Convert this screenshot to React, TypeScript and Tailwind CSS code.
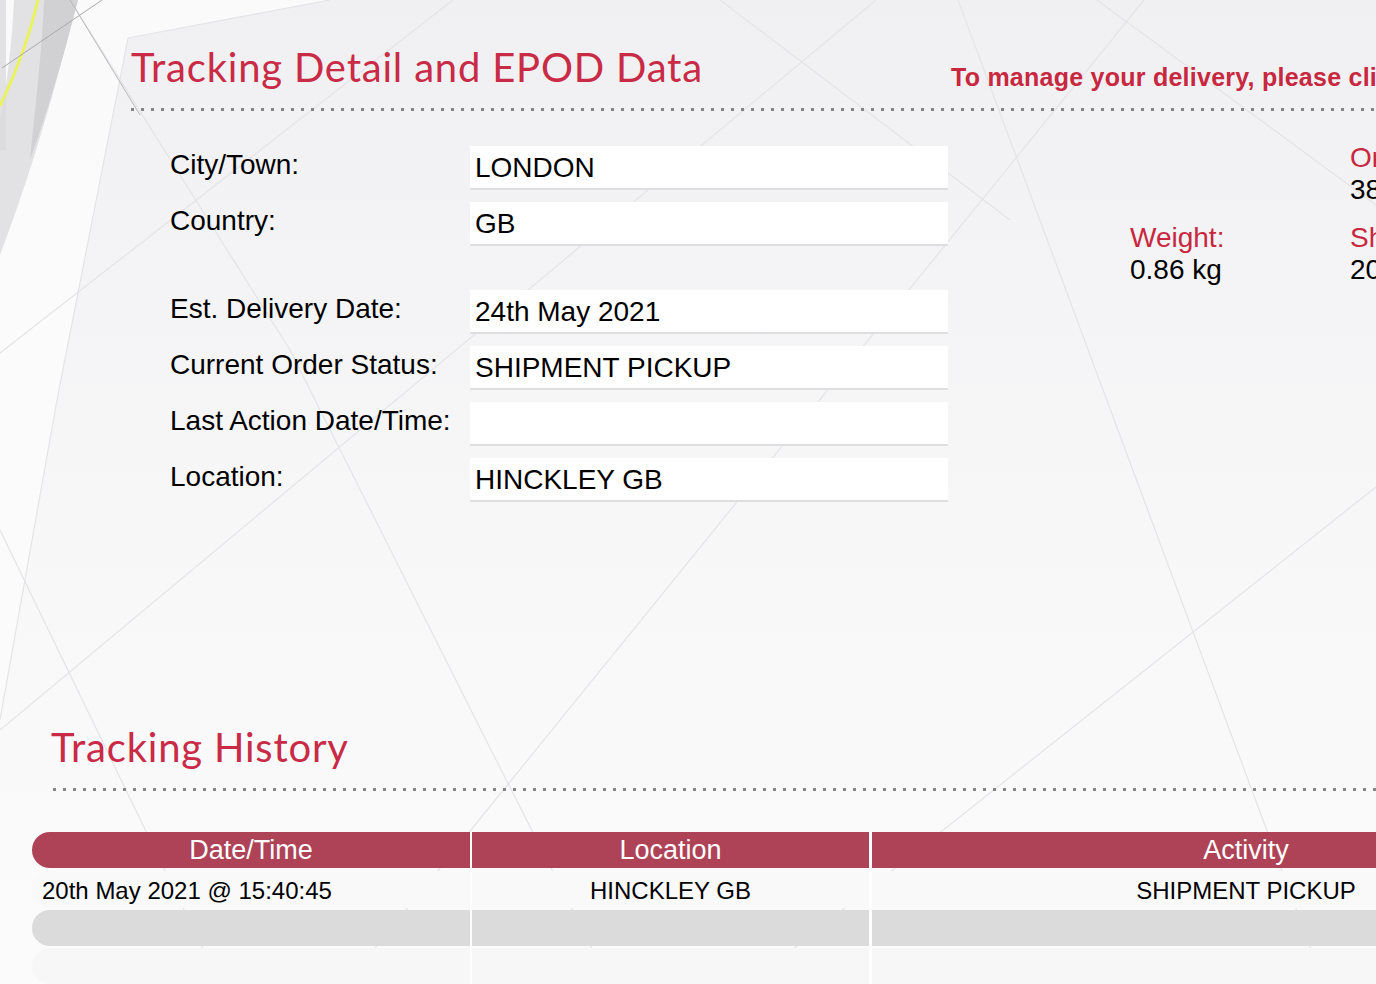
import React from "react";

function Background() {
  const faint = "#e4e4e8";
  return (
    <svg
      className="absolute inset-0"
      width={1376}
      height={984}
      viewBox="0 0 1376 984"
      aria-hidden="true"
    >
      <defs>
        <linearGradient id="bgGrad" x1="0" y1="0" x2="0" y2="1">
          <stop offset="0" stopColor="#f0f0f2" />
          <stop offset="0.6" stopColor="#f8f8f9" />
          <stop offset="1" stopColor="#fbfbfc" />
        </linearGradient>
      </defs>
      <rect x="0" y="0" width="1376" height="984" fill="url(#bgGrad)" />
      {/* lighter left region */}
      <polygon points="0,0 330,0 128,38 57,400 0,720" fill="#fbfbfb" opacity="0.85" />
      {/* faint long lines */}
      <g stroke={faint} strokeWidth="1.2" fill="none">
        <polyline points="70,0 290,350 491,750 610,984" />
        <line x1="0" y1="353" x2="453" y2="0" />
        <line x1="876" y1="0" x2="0" y2="730" />
        <line x1="1144" y1="0" x2="346" y2="984" />
        <line x1="958" y1="0" x2="1324" y2="984" />
        <line x1="1376" y1="487" x2="749" y2="984" />
        <line x1="0" y1="530" x2="220" y2="984" />
        <line x1="720" y1="0" x2="1010" y2="220" />
        <line x1="1097" y1="0" x2="1376" y2="205" />
        <line x1="128" y1="38" x2="57" y2="400" />
        <line x1="57" y1="400" x2="0" y2="720" />
        <line x1="128" y1="38" x2="330" y2="0" />
      </g>
      {/* left gray band */}
      <rect x="0" y="0" width="6" height="150" fill="#dcdcde" opacity="0.8" />
      <path d="M14,0 L78,0 C62,60 40,150 0,255 L0,120 C8,80 12,40 14,0 Z" fill="#dadadc" opacity="0.75" />
      <path d="M44,0 L78,0 C64,55 48,110 30,160 C36,100 42,50 44,0 Z" fill="#cbcbcd" opacity="0.7" />
      <path d="M38,0 Q26,52 0,106" stroke="#eaf35c" strokeWidth="3" fill="none" />
      <line x1="2" y1="68" x2="102" y2="0" stroke="#a9a9ab" strokeWidth="1" />
      <line x1="70" y1="0" x2="140" y2="115" stroke="#b8b8ba" strokeWidth="1" />
    </svg>
  );
}

function Dots({ className }: { className: string }) {
  return (
    <div
      className={
        "h-[3px] bg-[linear-gradient(to_right,#858585_3px,transparent_3px)] bg-[length:10px_3px] bg-repeat-x " +
        className
      }
    />
  );
}

function FormRow({ label, value, extra }: { label: string; value: string; extra?: string }) {
  return (
    <div className={"flex " + (extra || "")}>
      <div className="w-[300px] pt-[3px] text-[28px] leading-[32px] text-black whitespace-nowrap">{label}</div>
      <div className="w-[478px] h-[44px] bg-white border-b-2 border-[#dedee0] pl-[5px] pt-[6px] text-[28px] leading-[32px] text-black whitespace-nowrap">
        {value}
      </div>
    </div>
  );
}

function InfoPair({ label, value, extra }: { label: string; value: string; extra?: string }) {
  return (
    <div className={"text-[28px] leading-[32px] whitespace-nowrap " + (extra || "")}>
      <div className="text-[#c8283f]">{label}</div>
      <div className="text-black">{value}</div>
    </div>
  );
}

export default function App() {
  return (
    <div className="relative w-[1376px] h-[984px] overflow-hidden font-['Liberation_Sans',Arial,sans-serif]">
      <Background />
      <div className="relative">
        {/* Header */}
        <div className="flex items-start pl-[131px] pt-[43px]">
          <h1 className="w-[820px] shrink-0 font-['Lato',sans-serif] text-[40px] leading-[48px] tracking-[0.8px] text-[#c92a45] whitespace-nowrap">
            Tracking Detail and EPOD Data
          </h1>
          <div className="mt-[20px] text-[25px] leading-[28px] font-bold tracking-[0.25px] text-[#c8283f] whitespace-nowrap">
            To manage your delivery, please click here
          </div>
        </div>
        <Dots className="ml-[131px] mt-[17px] w-[1245px]" />

        {/* Detail section */}
        <div className="flex mt-[35px] pl-[170px]">
          <div className="flex flex-col shrink-0">
            <FormRow label="City/Town:" value="LONDON" />
            <FormRow label="Country:" value="GB" extra="mt-[12px]" />
            <FormRow label="Est. Delivery Date:" value="24th May 2021" extra="mt-[44px]" />
            <FormRow label="Current Order Status:" value="SHIPMENT PICKUP" extra="mt-[12px]" />
            <FormRow label="Last Action Date/Time:" value="" extra="mt-[12px]" />
            <FormRow label="Location:" value="HINCKLEY GB" extra="mt-[12px]" />
          </div>
          <div className="flex ml-[182px] -mt-[4px] shrink-0">
            <div className="w-[220px] shrink-0">
              <InfoPair label="Weight:" value="0.86 kg" extra="mt-[80px]" />
            </div>
            <div className="shrink-0">
              <InfoPair label="Order Number:" value="3804127761" />
              <InfoPair label="Shipped Date:" value="20th May 2021" extra="mt-[16px]" />
            </div>
          </div>
        </div>

        {/* Tracking history */}
        <h2 className="mt-[221px] pl-[51px] font-['Lato',sans-serif] text-[40px] leading-[48px] tracking-[0.8px] text-[#c92a45] whitespace-nowrap">
          Tracking History
        </h2>
        <Dots className="ml-[53px] mt-[17px] w-[1323px]" />

        <div className="ml-[32px] mt-[41px] w-[1588px]">
          <div className="flex h-[36px] text-white text-[27px] leading-[36px]">
            <div className="w-[440px] shrink-0 border-r-2 border-white">
              <div className="h-full rounded-l-[18px] bg-[#ae4257] text-center">Date/Time</div>
            </div>
            <div className="w-[400px] shrink-0 border-r-[3px] border-white bg-[#ae4257] text-center">Location</div>
            <div className="w-[748px] shrink-0 bg-[#ae4257] text-center">Activity</div>
          </div>
          <div className="flex h-[37px] mt-[3px] text-black text-[24px] leading-[37px]">
            <div className="w-[440px] shrink-0 border-r-2 border-white">
              <div className="h-full rounded-l-[18px] bg-[#f9f9f9] pl-[10px] pt-[1px]">20th May 2021 @ 15:40:45</div>
            </div>
            <div className="w-[400px] shrink-0 border-r-[3px] border-white bg-[#f9f9f9] text-center pt-[1px]">HINCKLEY GB</div>
            <div className="w-[748px] shrink-0 bg-[#f9f9f9] text-center pt-[1px]">SHIPMENT PICKUP</div>
          </div>
          <div className="flex h-[36px] mt-[2px]">
            <div className="w-[440px] shrink-0 border-r-2 border-white">
              <div className="h-full rounded-l-[18px] bg-[#dbdbdb]" />
            </div>
            <div className="w-[400px] shrink-0 border-r-[3px] border-white bg-[#dbdbdb]" />
            <div className="w-[748px] shrink-0 bg-[#dbdbdb]" />
          </div>
          <div className="flex h-[36px] mt-[2px]">
            <div className="w-[440px] shrink-0 border-r-2 border-white">
              <div className="h-full rounded-l-[18px] bg-[#f7f7f7]" />
            </div>
            <div className="w-[400px] shrink-0 border-r-[3px] border-white bg-[#f7f7f7]" />
            <div className="w-[748px] shrink-0 bg-[#f7f7f7]" />
          </div>
        </div>
      </div>
    </div>
  );
}
